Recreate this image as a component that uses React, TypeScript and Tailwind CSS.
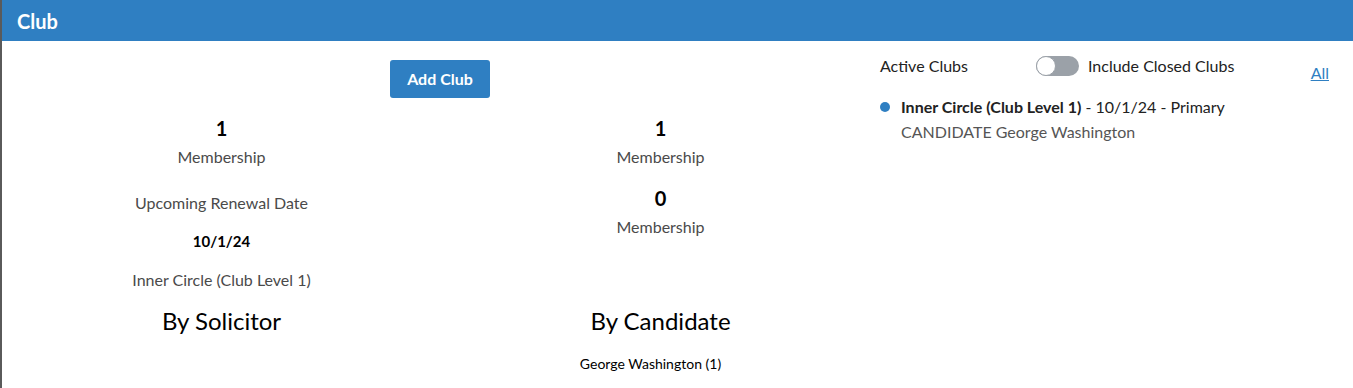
import React, { useState } from 'react';

const Stat = ({ value, label, className = '' }: { value: string; label: string; className?: string }) => (
  <div className={`flex flex-col items-center ${className}`}>
    <div className="text-[20px] leading-7 font-bold text-black">{value}</div>
    <div className="mt-[4px] text-[16px] leading-[22px] text-[#4a4a4a]">{label}</div>
  </div>
);

const App = () => {
  const [includeClosed, setIncludeClosed] = useState(false);

  return (
    <div
      className="min-h-[388px] bg-white border-l-2 border-[#5a5a5a]"
      style={{ fontFamily: 'Lato, "Open Sans", "Liberation Sans", sans-serif' }}
    >
      {/* Header */}
      <div className="h-[41px] bg-[#2f7fc2] flex items-center px-[15px]">
        <h2 className="text-white font-bold text-[20px]">Club</h2>
      </div>

      <div className="flex">
        {/* Summary */}
        <div className="w-[878px] shrink-0">
          <div className="flex justify-center pt-[19px]">
            <button className="h-[38px] w-[100px] rounded-[3px] bg-[#2f7fc2] text-white font-bold text-[16px] mr-[2px]">
              Add Club
            </button>
          </div>

          <div className="grid grid-cols-2">
            {/* By Solicitor column */}
            <div className="flex flex-col items-center pt-4">
              <Stat value="1" label="Membership" />
              <div className="mt-[24px] text-[16px] leading-[22px] text-[#4a4a4a]">Upcoming Renewal Date</div>
              <div className="mt-[17px] text-[15px] leading-5 font-bold text-black">10/1/24</div>
              <div className="mt-[18px] text-[16px] leading-[22px] text-[#4a4a4a]">Inner Circle (Club Level 1)</div>
              <div className="mt-[15px] text-[24px] leading-[30px] text-black">By Solicitor</div>
            </div>

            {/* By Candidate column */}
            <div className="flex flex-col items-center pt-4">
              <Stat value="1" label="Membership" />
              <Stat value="0" label="Membership" className="mt-[16px]" />
              <div className="mt-[68px] text-[24px] leading-[30px] text-black">By Candidate</div>
              <div className="mt-[18px] mr-[20px] text-[14px] leading-5 text-black">George Washington (1)</div>
            </div>
          </div>
        </div>

        {/* Active clubs */}
        <div className="flex-1 pt-[14px] pr-[24px]">
          <div className="flex items-start">
            <div className="flex-1 flex items-center">
              <span className="w-[156px] text-[16px] leading-[22px] text-[#222]">Active Clubs</span>
              <button
                onClick={() => setIncludeClosed(!includeClosed)}
                className={`relative h-[20px] w-[43px] rounded-full ${includeClosed ? 'bg-[#2f7fc2]' : 'bg-[#9ba1a8]'}`}
              >
                <span
                  className={`absolute top-0 h-[20px] w-[20px] rounded-full bg-white border border-[#9ba1a8] ${
                    includeClosed ? 'left-[23px]' : 'left-0'
                  }`}
                />
              </button>
              <span className="ml-[9px] text-[16px] leading-[22px] text-[#222]">Include Closed Clubs</span>
            </div>
            <a href="#" className="mt-[7px] text-[16px] leading-[22px] text-[#2f7fc2] underline">
              All
            </a>
          </div>

          <div className="mt-[12px] flex items-start">
            <span className="mt-[6px] h-[10px] w-[10px] rounded-full bg-[#2f7fc2] shrink-0" />
            <div className="ml-[11px]">
              <div className="text-[16px] leading-[22px] text-[#222]">
                <span className="font-bold">Inner Circle (Club Level 1)</span> - 10/1/24 - Primary
              </div>
              <div className="mt-[3px] text-[16px] leading-[22px] text-[#555]">CANDIDATE George Washington</div>
            </div>
          </div>
        </div>
      </div>
    </div>
  );
};

export default App;
